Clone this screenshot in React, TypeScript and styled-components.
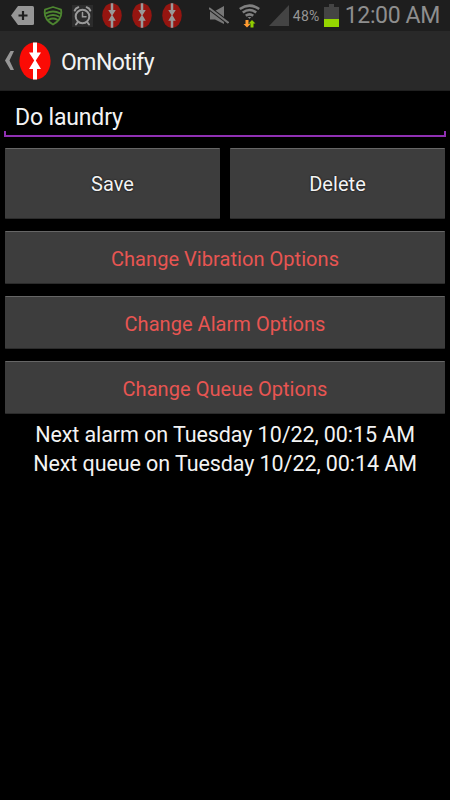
import React from "react";
import styled, { createGlobalStyle } from "styled-components";

const Global = createGlobalStyle`
  * { box-sizing: border-box; }
  html, body { margin: 0; background: #000; }
  body { font-family: Roboto, "Liberation Sans", sans-serif; }
`;

const Screen = styled.div`
  width: 450px;
  height: 800px;
  background: #000;
  color: #f3f3f3;
  overflow: hidden;
`;

const StatusBar = styled.div`
  display: flex;
  align-items: center;
  justify-content: space-between;
  height: 31px;
  padding: 0 10px 0 11px;
  background: #1e1e1e;
  color: #969696;
`;

const StatusGroup = styled.div`
  display: flex;
  align-items: center;
  height: 31px;
`;

const Glyph = styled.svg<{ $gap?: number }>`
  display: block;
  flex: none;
  margin-right: ${(p) => p.$gap ?? 0}px;
`;

const Percent = styled.span`
  width: 29px;
  margin-right: 2px;
  font-size: 14px;
  line-height: 31px;
  letter-spacing: 0.3px;
  padding-top: 1px;
  white-space: nowrap;
`;

const Clock = styled.span`
  font-size: 23px;
  font-weight: 400;
  line-height: 31px;
  letter-spacing: -0.35px;
  color: #8e8e8e;
  white-space: nowrap;
`;

const ActionBar = styled.header`
  display: flex;
  align-items: center;
  height: 60px;
  padding: 0 0 0 5px;
  background: #292929;
  border-bottom: 1px solid #202020;
`;

const Title = styled.h1`
  margin: 5px 0 0;
  font-size: 23px;
  font-weight: 400;
  line-height: 30px;
  letter-spacing: -0.55px;
`;

const Field = styled.div`
  height: 46px;
  margin: 0 4px;
  padding: 14px 0 0 11px;
  font-size: 23px;
  line-height: 26px;
  letter-spacing: -0.15px;
  border-bottom: 2px solid #8f30b3;
  background:
    linear-gradient(#8f30b3, #8f30b3) 0 100% / 2px 4px no-repeat,
    linear-gradient(#8f30b3, #8f30b3) 100% 100% / 2px 4px no-repeat;
`;

const Actions = styled.main`
  display: grid;
  grid-template-columns: 215px 215px;
  column-gap: 10px;
  row-gap: 12px;
  padding: 11px 5px 0;
`;

const Button = styled.button<{ $wide?: boolean }>`
  grid-column: ${(p) => (p.$wide ? "1 / -1" : "auto")};
  height: ${(p) => (p.$wide ? 53 : 71)}px;
  padding: ${(p) => (p.$wide ? 2 : 1)}px 0 0;
  border: 0;
  border-top: 1px solid #666;
  border-bottom: 1px solid #2b2b2b;
  border-radius: 1px;
  background: #3d3d3d;
  color: ${(p) => (p.$wide ? "#e85552" : "#f3f3f3")};
  font: 400 20px Roboto, "Liberation Sans", sans-serif;
  letter-spacing: 0.05px;
  text-shadow: ${(p) => (p.$wide ? "none" : "0 0 2px #000")};
`;

const Schedule = styled.div`
  padding-top: 6px;
  text-align: center;
`;

const ScheduleLine = styled.p`
  margin: 0;
  font-size: 21.5px;
  line-height: 29px;
  letter-spacing: -0.08px;
  white-space: nowrap;
`;

function OmGlyph({ w, h, gap, disc, mark }: { w: number; h: number; gap: number; disc: string; mark: string }) {
  return (
    <Glyph width={w} height={h} viewBox="0 0 32 38" preserveAspectRatio="none" $gap={gap}>
      <ellipse cx="16" cy="19" rx="15.6" ry="18.6" fill={disc} />
      <path fill={mark} d="M14 .5h4v10h4L16.800 18.500 22 27h-4v10.500h-4v-10.500h-4L15.200 18.500 10 10.500h4z" />
    </Glyph>
  );
}

export default function App() {
  return (
    <>
      <Global />
      <Screen>
        <StatusBar>
          <StatusGroup>
            <Glyph width="23" height="19" viewBox="0 0 23 19" $gap={9}>
              <path d="M7 0h14.500q1.500 0 1.500 1.500v16q0 1.500-1.500 1.500H7L0 9.500z" fill="#969696" />
              <path d="M12 5v9M7.500 9.500h9" stroke="#1e1e1e" strokeWidth="2.200" />
            </Glyph>
            <Glyph width="20" height="20" viewBox="0 0 20 20" $gap={9} fill="none" stroke="#4d8530" strokeLinecap="round">
              <path d="M10 1Q14 2 18 3.600Q20 13 10 18.500Q0 13 2 3.600Q6 2 10 1z" strokeWidth="1.800" />
              <path d="M2.800 7.300Q10 3.800 17.200 7.300M4.200 10.500Q10 7.500 15.800 10.500M6 13.600Q10 11.300 14 13.600" strokeWidth="1.900" />
            </Glyph>
            <Glyph width="21" height="22" viewBox="0 0 21 22" $gap={9}>
              <path fill="#2c2c2c" d="M0 0h21v22H0z" />
              <g fill="none" stroke="#9a9a9a" strokeLinecap="round">
                <circle cx="10.500" cy="11.500" r="6.800" strokeWidth="2" />
                <path d="M10.500 7.500v4.300h3.500" strokeWidth="1.500" />
                <path d="M2.700 5.600Q3.500 3 6.300 2.300M18.300 5.600Q17.500 3 14.700 2.300" strokeWidth="2" />
                <path d="M5.500 17.500L4 19.500M15.500 17.500l1.500 2" strokeWidth="2" />
              </g>
            </Glyph>
            <OmGlyph w={20} h={25} gap={10} disc="#951510" mark="#999" />
            <OmGlyph w={20} h={25} gap={10} disc="#951510" mark="#999" />
            <OmGlyph w={20} h={25} gap={0} disc="#951510" mark="#999" />
          </StatusGroup>
          <StatusGroup>
            <Glyph width="20" height="20" viewBox="0 0 20 20" $gap={10}>
              <path d="M1 5h5l9-5v18l-9-4.500H1z" fill="#777" />
              <path d="M0 2L19.500 17" stroke="#1e1e1e" strokeWidth="4" />
              <path d="M0 2L19.500 17" stroke="#777" strokeWidth="2" />
            </Glyph>
            <Glyph width="21" height="24" viewBox="0 0 21 24" $gap={9}>
              <g fill="none" stroke="#808080" strokeWidth="2.600">
                <path d="M.8 5Q10.500-1.800 20.200 5M3.800 8.500Q10.500 3.500 17.200 8.500M6.800 11.800Q10.500 8.800 14.200 11.800" />
              </g>
              <path d="M8.700 13h3.600l-1.800 2z" fill="#808080" />
              <path d="M6.500 16h3v4h2L8 23.500 4.500 20h2z" fill="#ff9b32" />
              <path d="M11.500 23.500h3v-4h2L13 16l-3.500 3.500h2z" fill="#91cd00" />
            </Glyph>
            <Glyph width="20" height="21" viewBox="0 0 20 21" $gap={4}>
              <path d="M20 0v21H0z" fill="#444" />
            </Glyph>
            <Percent>48%</Percent>
            <Glyph width="15" height="23" viewBox="0 0 15 23" $gap={6}>
              <path d="M5 0h5v3h5v12H0V3h5z" fill="#444" />
              <path d="M0 15h15v8H0z" fill="#94d500" />
            </Glyph>
            <Clock>12:00 AM</Clock>
          </StatusGroup>
        </StatusBar>
        <ActionBar>
          <Glyph width="9" height="19" viewBox="0 0 9 19" $gap={5}>
            <path d="M5.500 0H9L4.500 9.500 9 19H5.500L0 9.500z" fill="#969696" />
          </Glyph>
          <OmGlyph w={32} h={38} gap={10} disc="#fb0b05" mark="#fff" />
          <Title>OmNotify</Title>
        </ActionBar>
        <Field>Do laundry</Field>
        <Actions>
          <Button>Save</Button>
          <Button>Delete</Button>
          <Button $wide>Change Vibration Options</Button>
          <Button $wide>Change Alarm Options</Button>
          <Button $wide>Change Queue Options</Button>
        </Actions>
        <Schedule>
          <ScheduleLine>Next alarm on Tuesday 10/22, 00:15 AM</ScheduleLine>
          <ScheduleLine>Next queue on Tuesday 10/22, 00:14 AM</ScheduleLine>
        </Schedule>
      </Screen>
    </>
  );
}
